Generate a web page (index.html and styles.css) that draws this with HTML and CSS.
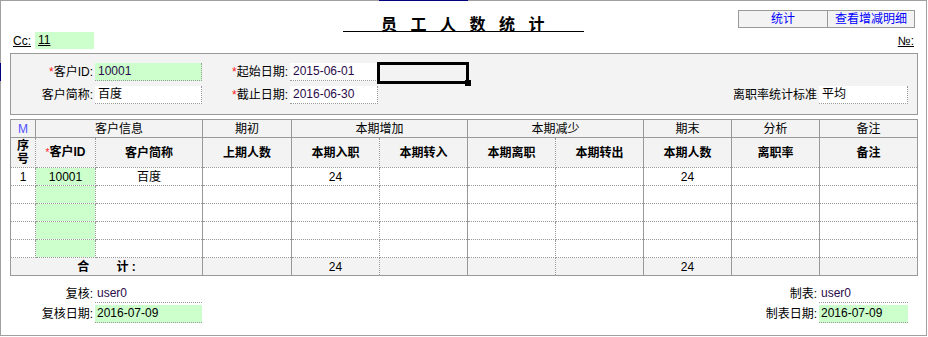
FILE: index.html
```html
<!DOCTYPE html>
<html lang="zh-CN">
<head>
  <meta charset="UTF-8">
  <title>员工人数统计</title>
  <link rel="stylesheet" href="styles.css">
</head>
<body>
  <div class="sheet">
    <span class="mark mark-col"></span>
    <span class="mark mark-row"></span>

    <div class="head-top">
      <div></div>
      <h1 class="title">员工人数统计</h1>
      <div class="actions">
        <a class="act act-sum">统计</a>
        <a class="act act-detail">查看增减明细</a>
      </div>
    </div>
    <div class="head-sub">
      <div class="cc">
        <span class="cc-label">Cc:</span>
        <span class="cc-val"><u>11</u></span>
      </div>
      <span class="no">№:</span>
    </div>

    <div class="filter">
      <label class="lbl"><span class="req">*</span>客户ID:</label>
      <div class="field green val">10001</div>
      <label class="lbl"><span class="req">*</span>起始日期:</label>
      <div class="field val">2015-06-01</div>
      <div class="cur"></div>
      <div class="spacer"></div>
      <div></div>
      <div></div>

      <label class="lbl">客户简称:</label>
      <div class="field">百度</div>
      <label class="lbl"><span class="req">*</span>截止日期:</label>
      <div class="field val">2016-06-30</div>
      <div></div>
      <div class="spacer"></div>
      <label class="lbl">离职率统计标准</label>
      <div class="field">平均</div>
    </div>

    <table class="grid">
      <colgroup>
        <col style="width:25px">
        <col style="width:60px">
        <col style="width:107px">
        <col class="gs" style="width:89px">
        <col class="gs" style="width:88px">
        <col style="width:88px">
        <col class="gs" style="width:88px">
        <col style="width:88px">
        <col class="gs" style="width:88px">
        <col class="gs" style="width:88px">
        <col class="gs" style="width:98px">
      </colgroup>
      <thead>
        <tr class="hd-group">
          <th class="m">M</th>
          <th colspan="2">客户信息</th>
          <th>期初</th>
          <th colspan="2">本期增加</th>
          <th colspan="2">本期减少</th>
          <th>期末</th>
          <th>分析</th>
          <th>备注</th>
        </tr>
        <tr class="hd-sub">
          <th class="seq">序<br>号</th>
          <th><span class="req">*</span>客户ID</th>
          <th>客户简称</th>
          <th>上期人数</th>
          <th>本期入职</th>
          <th>本期转入</th>
          <th>本期离职</th>
          <th>本期转出</th>
          <th>本期人数</th>
          <th>离职率</th>
          <th>备注</th>
        </tr>
      </thead>
      <tbody>
        <tr>
          <td>1</td><td class="green">10001</td><td>百度</td><td></td><td>24</td>
          <td></td><td></td><td></td><td>24</td><td></td><td></td>
        </tr>
        <tr>
          <td></td><td class="green"></td><td></td><td></td><td></td>
          <td></td><td></td><td></td><td></td><td></td><td></td>
        </tr>
        <tr>
          <td></td><td class="green"></td><td></td><td></td><td></td>
          <td></td><td></td><td></td><td></td><td></td><td></td>
        </tr>
        <tr>
          <td></td><td class="green"></td><td></td><td></td><td></td>
          <td></td><td></td><td></td><td></td><td></td><td></td>
        </tr>
        <tr>
          <td></td><td class="green"></td><td></td><td></td><td></td>
          <td></td><td></td><td></td><td></td><td></td><td></td>
        </tr>
        <tr class="total">
          <td colspan="3" class="total-label">合&emsp;&emsp;&nbsp;计 :</td>
          <td></td><td>24</td><td></td><td></td><td></td><td>24</td><td></td><td></td>
        </tr>
      </tbody>
    </table>

    <div class="sign">
      <label class="lbl">复核:</label>
      <div class="line val">user0</div>
      <div></div>
      <label class="lbl">制表:</label>
      <div class="line val">user0</div>

      <label class="lbl">复核日期:</label>
      <div class="line green">2016-07-09</div>
      <div></div>
      <label class="lbl">制表日期:</label>
      <div class="line green">2016-07-09</div>
    </div>
  </div>
</body>
</html>
```

FILE: styles.css
```css
body {
  margin: 0;
  background: #fff;
  color: #000;
  font-family: "Liberation Sans", "Noto Sans CJK SC", sans-serif;
  font-size: 12px;
}

.sheet {
  position: relative;
  box-sizing: border-box;
  width: 927px;
  height: 336px;
  border: 1px solid #a0a0a0;
}

/* selection markers on the frame */
.mark {
  position: absolute;
  background: #000080;
}

.mark-col {
  top: -1px;
  left: 378px;
  width: 89px;
  height: 1px;
}

.mark-row {
  top: 62px;
  left: -1px;
  width: 1px;
  height: 18px;
}

.head-top {
  display: grid;
  grid-template-columns: 1fr 241px 1fr;
  height: 31px;
}

.title {
  margin: 0;
  box-sizing: border-box;
  height: 31px;
  padding: 14px 0 0 12px;
  border-bottom: 1px solid #000;
  font-size: 16px;
  line-height: 16px;
  font-weight: bold;
  letter-spacing: 13.5px;
  text-align: center;
  font-family: "Noto Sans CJK SC", sans-serif;
}

.actions {
  justify-self: end;
  align-self: start;
  display: flex;
  margin: 9px 11px 0 0;
  border: 1px solid #999;
  background: #f3f3f3;
}

.act {
  color: #0000ff;
  text-align: center;
  line-height: 16px;
  height: 16px;
  cursor: pointer;
}

.act-sum {
  width: 88px;
  border-right: 1px solid #999;
}

.act-detail {
  width: 86px;
}

.head-sub {
  display: flex;
  justify-content: space-between;
  align-items: center;
  height: 17px;
}

.cc {
  display: flex;
  align-items: center;
  margin-left: 12px;
}

.cc-label {
  width: 22px;
  text-decoration: underline;
}

.cc-val {
  box-sizing: border-box;
  width: 59px;
  height: 17px;
  padding-left: 3px;
  line-height: 17px;
  background: #ccffcc;
}

.no {
  margin-right: 12px;
  text-decoration: underline;
}

.filter {
  display: grid;
  grid-template-columns: 84px 107px 88px 88px 89px 1fr auto 89px;
  grid-template-rows: 18px 18px;
  row-gap: 5px;
  margin: 4px 8px 0 9px;
  padding: 9px 9px 9px 0;
  height: 62px;
  box-sizing: border-box;
  border: 1px solid #999;
  background: #f3f3f3;
}

.lbl {
  align-self: center;
  text-align: right;
  padding-right: 2px;
  white-space: nowrap;
  line-height: 14px;
}

.req {
  color: #ff2020;
}

.field {
  box-sizing: border-box;
  height: 18px;
  padding-left: 3px;
  line-height: 17px;
  background: #fff;
  border-right: 1px dotted #999;
  border-bottom: 1px dotted #999;
}

.green {
  background: #ccffcc;
}

.val {
  color: #2a0a4a;
}

.cur {
  position: relative;
  box-sizing: border-box;
  width: 92px;
  height: 22px;
  margin: -1px 0 -3px -1px;
  border: 3px solid #000;
}

.cur::after {
  content: "";
  position: absolute;
  right: -5px;
  bottom: -5px;
  width: 6px;
  height: 6px;
  background: #000;
}

.grid {
  width: 908px;
  margin: 4px 0 0 9px;
  border-collapse: collapse;
  table-layout: fixed;
  border: 1px solid #999;
}

.grid col.gs {
  border-left: 1px solid #999;
}

.grid th,
.grid td {
  padding: 0;
  border: 1px dotted #999;
  text-align: center;
  font-size: 12px;
  line-height: 14px;
  overflow: hidden;
  white-space: nowrap;
}

.grid thead th {
  background: #f3f3f3;
}

.hd-group th {
  height: 17px;
  font-weight: normal;
  border: 1px solid #999;
}

.hd-group .m {
  color: #5050ff;
}

.hd-sub th {
  height: 29px;
  font-weight: bold;
  border-top: 1px solid #999;
}

.hd-sub .seq {
  line-height: 13px;
}

.hd-sub .req {
  font-weight: normal;
  font-size: 10px;
}

.grid tbody td {
  height: 17px;
}

.total td {
  background: #f3f3f3;
  border-bottom: 1px solid #999;
}

.total-label {
  font-weight: bold;
}

.sign {
  display: grid;
  grid-template-columns: 84px 107px 1fr auto 89px;
  grid-template-rows: 18px 18px;
  row-gap: 2px;
  margin: 9px 18px 0 10px;
}

.line {
  box-sizing: border-box;
  height: 18px;
  padding-left: 2px;
  line-height: 17px;
  border-bottom: 1px dotted #999;
}
```
